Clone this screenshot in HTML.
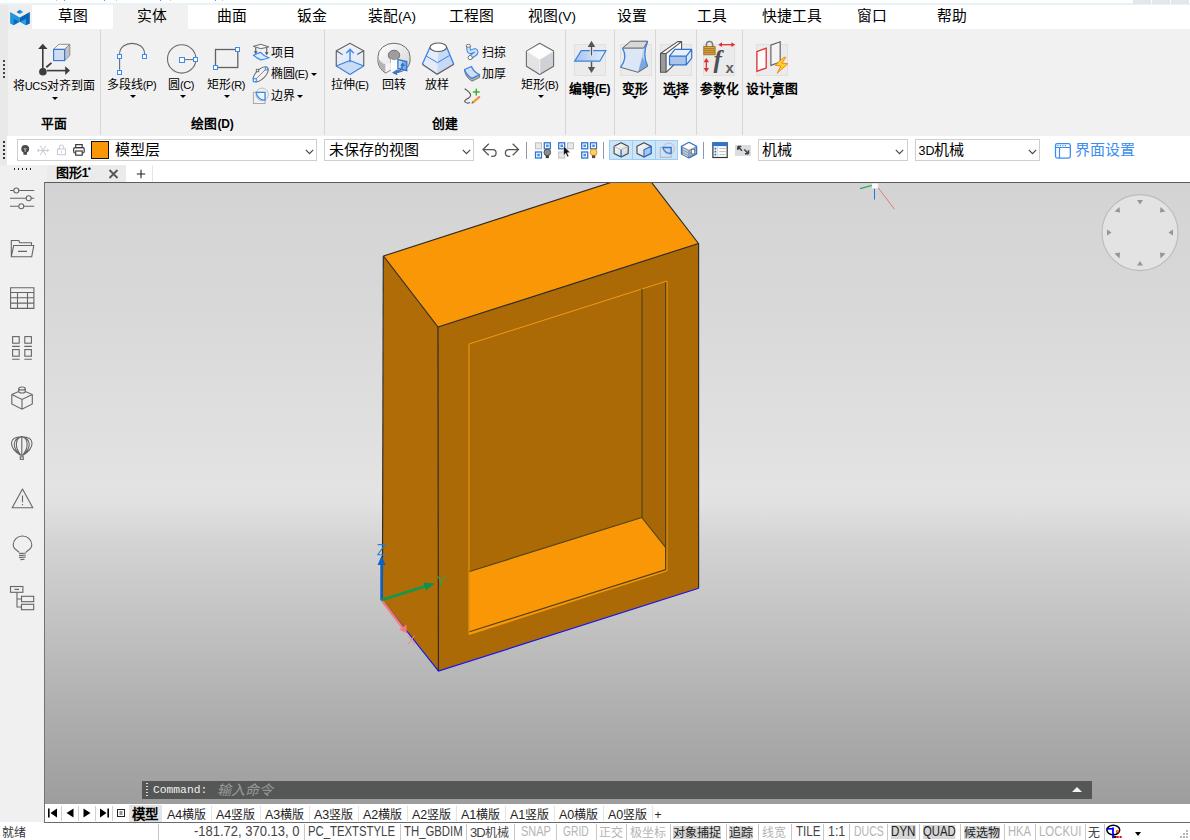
<!DOCTYPE html>
<html lang="zh-CN">
<head>
<meta charset="utf-8">
<title>CAD</title>
<style>
*{box-sizing:border-box;margin:0;padding:0}
html,body{width:1190px;height:840px;overflow:hidden;background:#fff}
body{position:relative;font-family:"Liberation Sans",sans-serif;font-size:12px;color:#000}
.abs{position:absolute}
.t{position:absolute;white-space:nowrap;line-height:1}
.l{font-size:11px;letter-spacing:-.35px}
#topstrip{left:0;top:0;width:1190px;height:5px;background:#fff}
#tabrow{left:0;top:5px;width:1190px;height:24px;background:#fff}
#gutterTop{left:0;top:5px;width:8px;height:131px;background:#e9e9ea}
#activeTab{left:113px;top:5px;width:75px;height:24px;background:#f1f1f1}
.tab{position:absolute;top:7.5px;font-size:14.8px;line-height:17px;white-space:nowrap;color:#000;transform:translateX(-50%)}
.tab .l{font-size:13.5px;letter-spacing:0}
#ribbon{left:8px;top:29px;width:1182px;height:107px;background:#f1f1f1}
.vsep{position:absolute;width:1px;background:#d6d6d6}
.rl{position:absolute;top:79px;font-size:12px;line-height:13px;white-space:nowrap;transform:translateX(-50%);color:#000}
.rlb{position:absolute;font-size:12.8px;line-height:13px;font-weight:bold;white-space:nowrap;transform:translateX(-50%);color:#000}
.rlb .l{font-size:12px;letter-spacing:-.2px}
.dd{position:absolute;width:0;height:0;border-left:3.5px solid transparent;border-right:3.5px solid transparent;border-top:3.4px solid #000}
.ibox{position:absolute;top:44px;width:32px;height:31.5px;background:#ebebeb;border:1px solid #e0e0e0}
#tb2{left:0;top:136px;width:1190px;height:29px;background:#fff}
.combo{position:absolute;top:139px;height:22px;border:1px solid #cfcfcf;background:#fff}
.combo>span{position:absolute;top:1px;font-size:15px;line-height:17px;white-space:nowrap}
#docrow{left:0;top:165px;width:1190px;height:17px;background:#f0f0f0}
#sidebar{left:0;top:165px;width:44px;height:657px;background:#f0f0f0}
#vp{left:44px;top:182px;width:1146px;height:622px;border-top:1px solid #5c5c5c;border-left:1.5px solid #747474;
background:linear-gradient(to bottom,#d3d3d3 0px,#d6d6d6 50px,#d7d7d7 100px,#e3e3e3 305px,#e1e1e1 320px,#d4d4d4 358px,#bfbfbf 454px,#aeaeae 533px,#9d9d9d 622px)}
#cmd{left:142px;top:781px;width:950px;height:18px;background:#555757}
#layrow{left:44px;top:804px;width:1146px;height:18px;background:#fff;border-left:1.5px solid #747474}
#status{left:0;top:822px;width:1190px;height:18px;background:#fff}
#stline{left:44px;top:822px;width:1146px;height:1px;background:#6a6a6a}
.st{position:absolute;top:826.5px;font-size:12px;line-height:13px;height:13.5px;white-space:nowrap;color:#444;transform-origin:0 0}
.st.e{top:825px;font-size:14px;transform:scaleX(.805)}
.st.n{top:825px;font-size:14px;transform:scaleX(.928)}
.st.g{color:#b4b4b4}
.st.on{background:#d6d6d6;color:#222}
.st.on:not(.e){top:825.5px;padding-top:1px;height:13.5px}
.ssep{position:absolute;top:824px;width:1px;height:16px;background:#c8c8c8}
.lt{position:absolute;top:808px;font-size:12px;line-height:14px;white-space:nowrap;color:#222}
.lt .l{font-size:12.5px;letter-spacing:-.2px}
</style>
</head>
<body>

<div class="abs" id="topstrip"></div>
<div class="abs" style="left:0;top:3px;width:1190px;height:2px;background:#e6f4f8"></div>
<div class="abs" style="left:1133px;top:0;width:18px;height:4px;background:#e5e6e9"></div>
<div class="abs" style="left:1152px;top:0;width:18px;height:4px;background:#e5e6e9"></div>
<div class="abs" style="left:1171px;top:0;width:18px;height:4px;background:#e5e6e9"></div>
<div class="abs" style="left:56px;top:0;width:1px;height:1px;background:#e8a040;opacity:.7"></div>
<div class="abs" style="left:64px;top:0;width:1px;height:1px;background:#4060c0;opacity:.7"></div>
<div class="abs" style="left:104px;top:0;width:1px;height:1px;background:#4060c0;opacity:.7"></div>
<div class="abs" style="left:116px;top:0;width:1px;height:1px;background:#e8a040;opacity:.7"></div>
<div class="abs" style="left:160px;top:0;width:1px;height:1px;background:#4060c0;opacity:.7"></div>
<div class="abs" style="left:170px;top:0;width:1px;height:1px;background:#e8a040;opacity:.7"></div>
<div class="abs" style="left:215px;top:0;width:1px;height:1px;background:#4060c0;opacity:.7"></div>
<div class="abs" style="left:222px;top:0;width:1px;height:1px;background:#e8a040;opacity:.7"></div>
<div class="abs" id="tabrow"></div>
<div class="abs" id="ribbon"></div>
<div class="abs" id="gutterTop"></div>
<div class="abs" id="activeTab"></div>
<div class="abs" style="left:8px;top:5px;width:24px;height:24px;background:#eeeeee"></div>
<svg class="abs" style="left:8px;top:5px" width="24" height="23" viewBox="8 5 24 23">
<polygon points="10.1,12.1 19.9,17.5 19.9,21.700 13.6,25.300 10.1,23.600" fill="#2196dc"/>
<polygon points="13.800,18.800 19.200,21.800 13.800,24.900" fill="#0a6ac0"/>
<polygon points="29.800,12.100 19.900,17.500 19.900,21.700 26.100,25.300 29.800,23.600" fill="#0a64b8"/>
<polygon points="26,18.800 20.600,21.800 26,24.900" fill="#2aa0e0"/>
<polygon points="16.600,11.900 19.900,9.800 19.900,13.900" fill="#0a6ac0"/>
<polygon points="23.200,11.900 19.900,9.800 19.900,13.900" fill="#2196dc"/>
</svg>
<div class="tab" style="left:73px">草图</div>
<div class="tab" style="left:152px">实体</div>
<div class="tab" style="left:232px">曲面</div>
<div class="tab" style="left:312px">钣金</div>
<div class="tab" style="left:392px">装配<span class="l">(A)</span></div>
<div class="tab" style="left:471.5px">工程图</div>
<div class="tab" style="left:552px">视图<span class="l">(V)</span></div>
<div class="tab" style="left:632px">设置</div>
<div class="tab" style="left:712px">工具</div>
<div class="tab" style="left:792px">快捷工具</div>
<div class="tab" style="left:872px">窗口</div>
<div class="tab" style="left:952px">帮助</div>
<div class="vsep" style="left:100px;top:30px;height:105px"></div>
<div class="vsep" style="left:324px;top:30px;height:105px"></div>
<div class="vsep" style="left:565px;top:30px;height:105px"></div>
<div class="vsep" style="left:614px;top:30px;height:105px"></div>
<div class="vsep" style="left:655px;top:30px;height:105px"></div>
<div class="vsep" style="left:696px;top:30px;height:105px"></div>
<div class="vsep" style="left:742px;top:30px;height:105px"></div>
<div class="abs" style="left:3px;top:60px;width:2px;height:18px;background:repeating-linear-gradient(to bottom,#444 0 2px,transparent 2px 4px)"></div>
<div class="ibox" style="left:574px"></div>
<div class="ibox" style="left:619.5px"></div>
<div class="ibox" style="left:660px"></div>
<div class="ibox" style="left:703px"></div>
<div class="ibox" style="left:756px"></div>
<svg class="abs" style="left:0;top:29px" width="1190" height="107" viewBox="0 29 1190 107">
<defs>
<linearGradient id="gPl" x1="0" y1="0" x2="1" y2="0"><stop offset="0" stop-color="#a6c3ee"/><stop offset="1" stop-color="#e6eefa"/></linearGradient>
<linearGradient id="gBx" x1="0" y1="0" x2="0" y2="1"><stop offset="0" stop-color="#eef2fa"/><stop offset="1" stop-color="#dbe7f8"/></linearGradient>
<linearGradient id="gRv" x1="0" y1="0" x2="1" y2="1"><stop offset="0" stop-color="#ffffff"/><stop offset="1" stop-color="#d4d4d4"/></linearGradient>
<linearGradient id="gSec" x1="0" y1="0" x2="1" y2="0"><stop offset="0" stop-color="#dfeafa"/><stop offset="1" stop-color="#5d97e2"/></linearGradient>
</defs>
<!-- UCS align -->
<g fill="#3c3c3c" stroke="#3c3c3c">
<line x1="42.8" y1="48" x2="42.8" y2="68.500" stroke-width="1.600"/>
<polygon points="42.8,43.7 38.1,48.9 47.5,48.9" stroke="none"/>
<line x1="47" y1="70.600" x2="66" y2="70.600" stroke-width="1.600"/>
<polygon points="70,70.600 65.2,66.200 65.2,75" stroke="none"/>
<line x1="46.300" y1="67.300" x2="51.500" y2="62.900" stroke-width="1.800"/>
<circle cx="42.900" cy="71.700" r="3.800" stroke="none"/>
</g>
<polygon points="53.500,49.300 58.800,44.300 69.800,44.300 64.600,49.300" fill="#f7f7f7" stroke="#858585" stroke-width=".9"/>
<polygon points="64.600,49.300 69.800,44.300 69.800,55.600 64.600,60.600" fill="#c2c2c2" stroke="#858585" stroke-width=".9"/>
<rect x="53.600" y="49.400" width="11" height="11.200" fill="#cfddf3" stroke="#2f74d0" stroke-width="1.100"/>
<!-- polyline -->
<path d="M119.600,54 C119.600,39.800 144.600,39.800 144.600,54 M119.600,58.900 V69.800" fill="none" stroke="#6a6a6a" stroke-width="1.100"/>
<g fill="#fff" stroke="#3b8cf0" stroke-width="1"><rect x="117.500" y="54.500" width="4" height="4"/><rect x="142.500" y="54.500" width="4" height="4"/><rect x="117.500" y="70.500" width="4" height="4"/></g>
<!-- circle -->
<circle cx="181.700" cy="58.900" r="14.200" fill="none" stroke="#6a6a6a" stroke-width="1.100"/>
<line x1="184.600" y1="59.600" x2="193.200" y2="59.600" stroke="#6a6a6a" stroke-width="1"/>
<g fill="#fff" stroke="#3b8cf0" stroke-width="1"><rect x="179.500" y="57.500" width="5" height="5"/><rect x="193.500" y="57.500" width="4" height="4"/></g>
<!-- rect -->
<rect x="215.500" y="49.500" width="22.300" height="18" fill="none" stroke="#5e6268" stroke-width="1.300"/>
<g fill="#fff" stroke="#3b8cf0" stroke-width="1"><rect x="235.500" y="47.500" width="4" height="4"/><rect x="213.500" y="65.500" width="4" height="4"/></g>
<!-- project -->
<path d="M253.300,46.300 L260.800,44.300 L268.800,46.900 L260.800,48.700 Z" fill="#f4f4f4" stroke="#6a6a6a" stroke-width="1"/>
<path d="M255.700,47.200 V52.800 M266.700,47.800 V53.800" stroke="#6a6a6a" stroke-width="1.200" fill="none"/>
<polygon points="253.800,51.300 257.600,51.300 255.700,54.200" fill="#5a5a5a"/><polygon points="264.800,52.300 268.600,52.300 266.700,55.200" fill="#5a5a5a"/>
<path d="M253.500,55.300 Q258,53.200 260.600,52.400 Q263.200,55.700 268.800,57.800 Q263.500,59.600 260.800,59.900 Q257,58.200 253.500,55.300 Z" fill="#e1ecfb" stroke="#3b8cf0" stroke-width="1.200"/>
<!-- ellipse -->
<ellipse cx="260.700" cy="74.300" rx="9.600" ry="4.700" transform="rotate(-45 260.700 74.300)" fill="none" stroke="#6a6a6a" stroke-width="1"/>
<line x1="254.800" y1="80.200" x2="266.500" y2="68.500" stroke="#8a8a8a" stroke-width="1"/>
<rect x="253.300" y="78.700" width="3" height="3" fill="#fff" stroke="#3b8cf0" stroke-width="1.100"/><rect x="265.300" y="67.700" width="2.300" height="2.300" fill="#fff" stroke="#3b8cf0" stroke-width="1"/>
<rect x="256.300" y="69.300" width="2.400" height="2.400" fill="#f4f4f4" stroke="#6a6a6a" stroke-width=".9"/>
<!-- boundary -->
<circle cx="262.100" cy="94.400" r="6.300" fill="none" stroke="#c4bccb" stroke-width="1"/>
<rect x="253.400" y="92.300" width="11.600" height="11.200" fill="none" stroke="#a8a8a8" stroke-width="1"/>
<path d="M256.300,92.300 H265 V100.200 A8.200,8.200 0 0 1 256.300,92.300 Z" fill="#f4f8fe" stroke="#3b8cf0" stroke-width="1.300"/>
<!-- extrude -->
<polygon points="350,43.300 363.750,50.800 363.750,66 350,74.500 336.250,66 336.250,50.800" fill="url(#gBx)"/>
<polygon points="336.250,66 350,60.500 363.750,66 350,74.500" fill="#c9dcf5" stroke="#3d82dc" stroke-width="1.100" stroke-linejoin="round"/>
<path d="M336.250,66 V50.800 L350,43.300 L363.750,50.800 V66 M336.250,50.800 L342.600,54.600 M363.750,50.800 L357.200,54.600" fill="none" stroke="#5a5a5a" stroke-width="1.100"/>
<path d="M350,62.200 V50 M346.200,53.300 L350,49.400 L353.800,53.300" fill="none" stroke="#4a8fe0" stroke-width="1.500"/>
<!-- revolve -->
<path d="M378,56.500 A16,13.300 0 0 1 410,56.500 V62 A16,13.300 0 0 1 398,72.500 L398,62 L391,60 V69.800 L385.500,73 Q379,69 378,62 Z" fill="url(#gRv)" stroke="#6c6c6c" stroke-width="1"/>
<path d="M378.400,58 V62 Q379.500,69 385.500,72.600 V64.600 Q380.500,62.500 378.400,58 Z" fill="#b4b4b4"/><path d="M385.500,64.600 V72.600 L390.800,69.600 V62.500 Z" fill="#f4f4f4"/>
<ellipse cx="394" cy="55.200" rx="5.700" ry="5" fill="#9d9d9d" stroke="#747474" stroke-width="1"/>
<path d="M390.900,58.800 Q394,61.200 397.400,59 L397.400,69 L390.900,71.300 Z" fill="#fdfdfd"/>
<polygon points="398,59.600 406.800,61.600 406.800,70.600 398,68.300" fill="url(#gSec)" stroke="#2f74d0" stroke-width="1.200"/>
<path d="M402.700,64.500 Q402.500,71 396,72.300" fill="none" stroke="#2f74d0" stroke-width="1.700"/>
<polygon points="392,72.700 397.200,69.400 397.200,75.200" fill="#2f74d0"/><polygon points="402.700,62.300 400.200,66 405.200,66" fill="#2f74d0"/>
<!-- loft -->
<polygon points="430,47.250 422.300,64.300 437.100,74.300 438.300,51.450" fill="#e4ecf9"/>
<polygon points="438.300,51.450 437.100,74.300 453.750,64.300 446.700,47.250" fill="#c6d9f5"/>
<path d="M422.300,64.300 L430,47.250 M446.700,47.250 L453.750,64.300" fill="none" stroke="#3d82dc" stroke-width="1.300"/>
<polyline points="426.200,56 437.500,62.700 449.300,55.600" fill="none" stroke="#3d82dc" stroke-width="1"/>
<polyline points="422.300,64.300 437.100,74.300 453.750,64.300" fill="none" stroke="#5a5a5a" stroke-width="1.200"/>
<ellipse cx="438.300" cy="47.250" rx="8.300" ry="4.200" fill="#fff" stroke="#5a5a5a" stroke-width="1.100"/>
<!-- sweep -->
<path d="M468.400,46.200 C468.400,52.400 469.600,52.800 473,50.900 C476.800,49 477.200,52.800 474.200,54.600 L470.300,57.400" fill="none" stroke="#3d82dc" stroke-width="4.400" stroke-linecap="butt"/>
<path d="M468.400,46.200 C468.400,52.400 469.600,52.800 473,50.900 C476.800,49 477.200,52.800 474.200,54.600 L470.300,57.400" fill="none" stroke="#cfe0f8" stroke-width="2.400"/>
<ellipse cx="468.400" cy="45.800" rx="2.300" ry="1.400" fill="#fff" stroke="#666" stroke-width=".9"/>
<circle cx="470.200" cy="57.600" r="2.100" fill="#fff" stroke="#666" stroke-width=".9"/>
<!-- thicken -->
<path d="M464.500,69.500 Q465,77 472,81.200 L479.600,77.400 V74.500 L472,78.300 Q466.500,75.500 464.500,69.500 Z" fill="#b2b2b2" stroke="#666" stroke-width=".8"/>
<path d="M464.500,69.500 L471.500,66.500 Q474,72.500 479.600,74.500 L472,78.300 Q466.500,75.500 464.500,69.500 Z" fill="#cfe0f6" stroke="#3d82dc" stroke-width="1.300" stroke-linejoin="round"/>
<!-- sketch plus -->
<path d="M464.700,88.700 Q470.600,92.500 470.600,95 Q470.600,97.500 466.500,99.200 Q463.500,100.800 465.500,102.400 Q467.500,103.700 469.900,102.500" fill="none" stroke="#555" stroke-width="1.100"/>
<path d="M476.300,88.700 V95.500 M472.900,92.100 H479.700" stroke="#3cb034" stroke-width="1.500" fill="none"/>
<line x1="473" y1="102.300" x2="478.600" y2="97.600" stroke="#f0a020" stroke-width="2.300"/>
<polygon points="471.400,103.700 472.200,101.300 473.900,103.100" fill="#666"/><circle cx="479.100" cy="97.100" r="1.200" fill="#ee7a90"/>
<!-- box -->
<polygon points="539.700,43.300 553.600,51.100 539.700,59.400 526.400,51.100" fill="#fdfdfd"/>
<polygon points="526.400,51.100 539.700,59.400 539.700,74.500 526.400,66.250" fill="#e3e3e3"/>
<polygon points="539.700,59.400 553.600,51.100 553.600,66.250 539.700,74.500" fill="#ced2d7"/>
<polygon points="539.700,43.300 553.600,51.100 553.600,66.250 539.700,74.500 526.400,66.250 526.400,51.100" fill="none" stroke="#6a6a6a" stroke-width="1.100" stroke-linejoin="round"/>
<path d="M526.900,51.400 L539.700,59.400 L553.100,51.400 M539.700,59.400 V74" fill="none" stroke="#f6f6f6" stroke-width=".9"/>
<!-- edit -->
<polygon points="574.600,61.200 581.200,50.600 605.900,50.600 599.800,61.200" fill="url(#gPl)" stroke="#3d82dc" stroke-width="1.200"/>
<line x1="591.500" y1="46" x2="591.500" y2="56" stroke="#fff" stroke-width="3.200"/>
<line x1="591.500" y1="46" x2="591.500" y2="55.600" stroke="#555" stroke-width="1.500"/>
<polygon points="591.500,40.800 587.800,47 595.200,47" fill="#555"/>
<line x1="591.500" y1="61.800" x2="591.500" y2="68" stroke="#555" stroke-width="1.500"/>
<polygon points="591.500,73 587.800,67 595.200,67" fill="#555"/>
<!-- deform -->
<path d="M622.500,48.100 Q628,57.500 620.500,67.300 L638.100,72.300 L643.700,48.100 Z" fill="#dbe6f7"/>
<path d="M643.700,48.100 L647.700,41.200 Q641.800,55 647.700,66.250 L638.100,72.300 Z" fill="#b9cfef"/>
<polygon points="647.400,66.250 638.100,72.300 642.300,57.500" fill="#7ba5df"/>
<polygon points="622.500,48.100 630.600,41.200 647.700,41.200 643.700,48.100" fill="#d8d8d8" stroke="#5a5a5a" stroke-width="1"/>
<path d="M622.500,48.100 Q628,57.500 620.500,67.300 M647.700,41.200 Q641.800,55 647.700,66.250" fill="none" stroke="#3d82dc" stroke-width="1.300"/>
<polyline points="620.500,67.300 638.100,72.300 647.700,66.250" fill="none" stroke="#666" stroke-width="1"/>
<!-- select -->
<polygon points="666.100,53.500 681.600,41.600 681.600,57.500 666.100,72.300" fill="#fbfbfb"/>
<polygon points="660.500,53.500 677.600,41.600 681.600,41.600 666.100,53.500" fill="#fff"/>
<rect x="660.500" y="53.500" width="5.600" height="18.800" fill="#9b9b9b"/>
<path d="M660.500,72.300 V53.500 L677.600,41.600 H681.600 V57.500 L666.100,72.300 Z M660.500,53.500 H666.100 L681.600,41.600 M666.100,53.500 V72.300" fill="none" stroke="#555" stroke-width="1.100" stroke-linejoin="round"/>
<polygon points="669.500,56.200 674.900,49.400 691.700,49.400 686.300,56.200" fill="#e9f0fb"/>
<polygon points="686.300,56.200 691.700,49.400 691.700,58.200 686.300,64.900" fill="#dfe9f8"/>
<rect x="669.500" y="56.200" width="16.800" height="8.700" fill="#a9c5ee"/>
<path d="M669.500,56.200 L674.900,49.400 H691.700 V58.200 L686.300,64.900 H669.500 Z M669.500,56.200 H686.300 L691.700,49.400 M686.300,56.200 V64.900" fill="none" stroke="#2f74d0" stroke-width="1.200" stroke-linejoin="round"/>
<!-- parametric -->
<path d="M706.400,47 V44.600 A3.100,3.100 0 0 1 712.600,44.600 V47" fill="none" stroke="#7a7a7a" stroke-width="1.500"/>
<rect x="703.800" y="46.600" width="11.300" height="8.200" fill="#dba844" stroke="#96641a" stroke-width=".8"/>
<path d="M704.200,48.700 H714.800 M704.200,50.700 H714.800 M704.200,52.700 H714.800" stroke="#96641a" stroke-width=".8"/>
<line x1="720.500" y1="44.700" x2="733" y2="44.700" stroke="#e03030" stroke-width="1.300"/>
<polygon points="718.200,44.700 722,42.300 722,47.100" fill="#e03030"/><polygon points="735.200,44.700 731.400,42.300 731.400,47.100" fill="#e03030"/>
<line x1="706.300" y1="60.500" x2="706.300" y2="69.500" stroke="#e03030" stroke-width="1.300"/>
<polygon points="706.300,58 703.600,62.200 709,62.200" fill="#e03030"/><polygon points="706.300,72.200 703.600,68 709,68" fill="#e03030"/>
<text x="713.500" y="68" font-family="Liberation Serif" font-style="italic" font-weight="bold" font-size="25" fill="#505050">f</text>
<text x="725.600" y="72.700" font-family="Liberation Sans" font-weight="bold" font-size="15" fill="#5e5e5e">x</text>
<!-- design intent -->
<polygon points="756.900,51.600 766.200,48.100 766.200,68 756.900,71.300" fill="#fbfbfb" stroke="#e03030" stroke-width="1.300"/>
<polygon points="770.900,45.100 780.200,41.800 780.200,62 770.900,65.300" fill="#f4f4f4" stroke="#666" stroke-width="1.200"/>
<polygon points="783.800,57.300 775.200,65.300 780.800,66 777.200,73.200 787.800,63.700 781.800,63.100 785.800,57.300" fill="#ffcf24" stroke="#f08a12" stroke-width="1"/>
</svg>

<div class="rl" style="left:53.8px;top:80.4px">将<span class="l">UCS</span>对齐到面</div>
<div class="dd" style="left:51.5px;top:96.60000000000001px"></div>
<div class="rl" style="left:131.5px;top:79px">多段线<span class="l">(P)</span></div>
<div class="dd" style="left:129.8px;top:95.2px"></div>
<div class="rl" style="left:181px;top:79px">圆<span class="l">(C)</span></div>
<div class="dd" style="left:179.6px;top:95.2px"></div>
<div class="rl" style="left:226px;top:79px">矩形<span class="l">(R)</span></div>
<div class="dd" style="left:223.6px;top:95.2px"></div>
<div class="rl" style="left:349.7px;top:79px">拉伸<span class="l">(E)</span></div>
<div class="rl" style="left:394px;top:79px">回转</div>
<div class="rl" style="left:437.3px;top:79px">放样</div>
<div class="rl" style="left:539.5px;top:79px">矩形<span class="l">(B)</span></div>
<div class="dd" style="left:537.5px;top:95.2px"></div>
<div class="t" style="left:270.5px;top:46.5px;font-size:12px;line-height:13px">项目</div>
<div class="t" style="left:270.5px;top:68px;font-size:12px;line-height:13px">椭圆<span class="l">(E)</span></div>
<div class="t" style="left:270.5px;top:89.7px;font-size:12px;line-height:13px">边界</div>
<div class="t" style="left:481.5px;top:46.5px;font-size:12px;line-height:13px">扫掠</div>
<div class="t" style="left:481.5px;top:68px;font-size:12px;line-height:13px">加厚</div>
<div class="dd" style="left:310.5px;top:73.2px"></div><div class="dd" style="left:296.500px;top:95.200px"></div>
<div class="rlb" style="left:589.7px;top:82px">编辑<span class="l">(E)</span></div>
<div class="dd" style="left:586.5px;top:96px"></div>
<div class="rlb" style="left:634.5px;top:82px">变形</div>
<div class="dd" style="left:631.6px;top:96px"></div>
<div class="rlb" style="left:675.8px;top:82px">选择</div>
<div class="dd" style="left:672.5px;top:96px"></div>
<div class="rlb" style="left:719px;top:82px">参数化</div>
<div class="dd" style="left:715.4px;top:96px"></div>
<div class="rlb" style="left:771.8px;top:82px">设计意图</div>
<div class="dd" style="left:768.5px;top:96px"></div>
<div class="rlb" style="left:54px;top:116.5px">平面</div>
<div class="rlb" style="left:212.5px;top:116.5px">绘图<span class="l">(D)</span></div>
<div class="rlb" style="left:445px;top:116.5px">创建</div>
<div class="abs" id="tb2"></div>
<div class="abs" style="left:0;top:136px;width:7px;height:29px;background:#e9e9ea"></div>
<div class="abs" style="left:3px;top:141px;width:2px;height:18px;background:repeating-linear-gradient(to bottom,#333 0 2px,transparent 2px 4px)"></div>
<div class="combo" style="left:17px;width:300px"><span style="left:97px">模型层</span></div><svg class="abs" style="left:304.8px;top:149px" width="9" height="6" viewBox="0 0 9 6"><polyline points="0.8,0.8 4.5,4.600 8.200,0.800" fill="none" stroke="#444" stroke-width="1.100"/></svg>
<div class="abs" style="left:91px;top:141px;width:18px;height:18px;background:#f99706;border:1px solid #111"></div>
<div class="combo" style="left:324px;width:150px"><span style="left:4px">未保存的视图</span></div><svg class="abs" style="left:461.8px;top:149px" width="9" height="6" viewBox="0 0 9 6"><polyline points="0.8,0.8 4.5,4.600 8.200,0.800" fill="none" stroke="#444" stroke-width="1.100"/></svg>
<div class="combo" style="left:758px;width:150px"><span style="left:3px">机械</span></div><svg class="abs" style="left:895.4px;top:149px" width="9" height="6" viewBox="0 0 9 6"><polyline points="0.8,0.8 4.5,4.600 8.200,0.800" fill="none" stroke="#444" stroke-width="1.100"/></svg>
<div class="combo" style="left:915px;width:125px"><span style="left:2.500px"><i style="font-style:normal;font-size:12.500px">3D</i>机械</span></div><svg class="abs" style="left:1027.6px;top:149px" width="9" height="6" viewBox="0 0 9 6"><polyline points="0.8,0.8 4.5,4.600 8.200,0.800" fill="none" stroke="#444" stroke-width="1.100"/></svg>
<div class="t" style="left:1074.500px;top:142px;font-size:15px;line-height:16px;color:#3b8ef0">界面设置</div>
<div class="abs" style="left:526px;top:141.500px;width:1px;height:17.500px;background:#8c98a4"></div>
<div class="abs" style="left:603px;top:141.500px;width:1px;height:17.500px;background:#8c98a4"></div>
<div class="abs" style="left:703px;top:141.500px;width:1px;height:17.500px;background:#8c98a4"></div>
<div class="abs" style="left:609px;top:139.500px;width:69px;height:20.500px;background:#cde5f8;border:1px solid #9ccdf5"></div>
<div class="abs" style="left:632px;top:139.500px;width:1px;height:20.500px;background:#9ccdf5"></div>
<div class="abs" style="left:655px;top:139.500px;width:1px;height:20.500px;background:#9ccdf5"></div>
<div class="abs" style="left:735px;top:144.500px;width:16px;height:11px;background:#d8dde1"></div>
<svg class="abs" style="left:0;top:136px" width="1190" height="29" viewBox="0 136 1190 29">
<defs><linearGradient id="gCb" x1="0" y1="0" x2="1" y2="1"><stop offset="0" stop-color="#ffffff"/><stop offset="1" stop-color="#d2d2d2"/></linearGradient></defs>
<!-- bulb -->
<circle cx="25.200" cy="148.800" r="3.900" fill="#4a4a4a"/><rect x="23.400" y="151.800" width="3.600" height="3" rx=".6" fill="#4a4a4a"/>
<path d="M24,148 L25.200,150 L26.400,148 M25.200,150 V152" fill="none" stroke="#d8d8d8" stroke-width=".8"/>
<!-- snowflake -->
<g stroke="#cdc5d6" stroke-width="1" fill="none"><path d="M37.500,150.400 H48.700 M40.300,145.700 L45.900,155.100 M45.900,145.700 L40.300,155.100"/><path d="M39,149 L37.500,150.400 L39,151.800 M47.200,149 L48.700,150.400 L47.200,151.800"/></g>
<!-- lock -->
<rect x="57.500" y="149" width="8" height="5.700" fill="none" stroke="#cdc5d6" stroke-width="1"/><path d="M59.300,149 V147.200 A2.200,2.200 0 0 1 63.700,147.200 V149" fill="none" stroke="#cdc5d6" stroke-width="1"/><rect x="61" y="151" width="1" height="2" fill="#cdc5d6"/>
<!-- printer -->
<g fill="none" stroke="#3c3c3c" stroke-width="1.200"><rect x="75.700" y="144.600" width="6.500" height="3"/><rect x="73.700" y="147.600" width="10.500" height="5.400" rx="1.200"/><rect x="75.700" y="151" width="6.500" height="4.200" fill="#fff"/></g>
<!-- undo / redo -->
<path d="M488.800,143.800 L483,149.600 L488.800,155.300 M483.400,149.600 H492.700 A3.400,3.400 0 0 1 492.700,156.400 H491.200" fill="none" stroke="#555" stroke-width="1.300"/>
<path d="M512.700,143.800 L518.500,149.600 L512.700,155.300 M518.100,149.600 H508.800 A3.400,3.400 0 0 0 508.800,156.400 H510.300" fill="none" stroke="#555" stroke-width="1.300"/>
<!-- select icons -->
<g id="sq">
<g fill="#e9e9e9" stroke="#bdbdbd" stroke-width="1"><rect x="535.500" y="142.800" width="6" height="6"/></g>
<g fill="#fff" stroke="#2f74d0" stroke-width="1.300"><rect x="544.300" y="142.800" width="6" height="6"/><rect x="535.500" y="152" width="6" height="6"/></g>
<g fill="#4a90f0"><rect x="546" y="144.500" width="2.600" height="2.600"/><rect x="537.200" y="153.700" width="2.600" height="2.600"/></g>
<circle cx="547.300" cy="152.400" r="3.300" fill="#8e8e8e" stroke="#4a4a4a" stroke-width=".9"/><rect x="545.700" y="155.300" width="3.200" height="2.800" fill="#3c3c3c"/>
</g>
<g fill="#e9e9e9" stroke="#bdbdbd" stroke-width="1"><rect x="567.500" y="142.800" width="6" height="6"/><rect x="558.700" y="152" width="6" height="6"/></g>
<rect x="558.700" y="142.800" width="6" height="6" fill="#fff" stroke="#2f74d0" stroke-width="1.300"/><rect x="560.400" y="144.500" width="2.600" height="2.600" fill="#4a90f0"/>
<polygon points="563.600,146 563.600,155.200 565.800,153.400 567.400,157 568.900,156.300 567.300,152.800 570.200,152.600" fill="#111" stroke="#fff" stroke-width=".5"/>
<g fill="#fff" stroke="#2f74d0" stroke-width="1.300"><rect x="581.700" y="142.800" width="6" height="6"/><rect x="590.500" y="142.800" width="6" height="6"/><rect x="581.700" y="152" width="6" height="6"/></g>
<g fill="#4a90f0"><rect x="583.400" y="144.500" width="2.600" height="2.600"/><rect x="592.200" y="144.500" width="2.600" height="2.600"/><rect x="583.400" y="153.700" width="2.600" height="2.600"/></g>
<circle cx="593.600" cy="152.300" r="3.400" fill="#fbd15a" stroke="#e58a1c" stroke-width=".9"/><rect x="592" y="155.300" width="3.200" height="2.800" fill="#5a4a3a"/>
<!-- cube buttons -->
<polygon points="621.100,142.700 628.200,146.300 628.200,153.400 621.100,156.900 614.100,153.400 614.100,146.300" fill="url(#gCb)" stroke="#444" stroke-width="1.100" stroke-linejoin="round"/>
<path d="M614.100,146.300 L621.100,149.800 L628.200,146.300" fill="none" stroke="#b0b0b0" stroke-width=".8"/><line x1="621.100" y1="149.800" x2="621.100" y2="156.600" stroke="#2f74d0" stroke-width="1.400"/>
<polygon points="644,142.700 651.100,146.300 651.100,153.400 644,156.900 637,153.400 637,146.300" fill="url(#gCb)" stroke="#444" stroke-width="1.100" stroke-linejoin="round"/>
<polygon points="644,149.800 651.100,146.300 651.100,153.400 644,156.900" fill="#a9c5ee" stroke="#2f74d0" stroke-width="1.200" stroke-linejoin="round"/>
<rect x="660.300" y="147.500" width="10.800" height="9.800" fill="none" stroke="#b4b4b4" stroke-width="1"/>
<circle cx="668.800" cy="148.600" r="5.600" fill="none" stroke="#cbb9c2" stroke-width="1"/>
<path d="M663,147.500 H671.100 V153.300 A7,7 0 0 1 663,147.500 Z" fill="#c4d8f4" stroke="#2f74d0" stroke-width="1.300"/>
<!-- textured cube -->
<polygon points="689,142.300 696.600,146.300 696.600,154 689,157.900 681.500,154 681.500,146.300" fill="#8fa0b4" stroke="#2f74d0" stroke-width="1.300" stroke-linejoin="round"/>
<polygon points="689,142.900 695.600,146.400 689,149.800 682.500,146.400" fill="#fff"/>
<path d="M683,149 L688,151.500 M683,151.500 L688,154 M683,154 L688,156.500 M690.500,151.500 L695.500,149 M690.500,154.500 L695.500,152" stroke="#e8e8e8" stroke-width=".9"/>
<rect x="691.500" y="149.300" width="3.200" height="4.600" fill="#fff" stroke="#555" stroke-width=".6"/>
<!-- properties -->
<rect x="712.900" y="142.900" width="14.300" height="14.600" fill="#fff" stroke="#333" stroke-width="1.200"/>
<rect x="712.300" y="142.300" width="15.500" height="3.800" fill="#2f74d0"/>
<line x1="717.700" y1="146.200" x2="717.700" y2="157" stroke="#c8c8c8" stroke-width=".8"/>
<g fill="#2f74d0"><rect x="714.500" y="147.700" width="1.800" height="1.800"/><rect x="714.500" y="150.700" width="1.800" height="1.800"/><rect x="714.500" y="153.700" width="1.800" height="1.800"/></g>
<path d="M719.300,148.600 H725.600 M719.300,151.600 H725.600 M719.300,154.600 H725.600" stroke="#b4b4b4" stroke-width=".9"/>
<!-- arrows button -->
<path d="M737.800,146.500 H741.300 M737.800,146.500 V150 M737.800,146.500 L742,150.700 M748.500,153.800 H745 M748.500,153.800 V150.300 M748.500,153.800 L744.300,149.600" fill="none" stroke="#3a3a3a" stroke-width="1.400"/>
<!-- interface settings -->
<rect x="1055.500" y="143.700" width="14.800" height="14.400" rx="1.800" fill="none" stroke="#3b8ef0" stroke-width="1.300"/>
<path d="M1055.500,147.500 H1070.300 M1059.500,147.500 V158" fill="none" stroke="#3b8ef0" stroke-width="1.200"/>
<g fill="#3b8ef0"><rect x="1057.300" y="145" width="1.200" height="1.200"/><rect x="1059.800" y="145" width="1.200" height="1.200"/><rect x="1062.300" y="145" width="1.200" height="1.200"/><rect x="1064.800" y="145" width="1.200" height="1.200"/></g>
</svg>

<div class="abs" id="docrow"></div>
<div class="abs" id="sidebar"></div>
<div class="abs" style="left:47px;top:165px;width:1143px;height:17px;background:#fff"></div>
<div class="abs" style="left:47px;top:165px;width:79px;height:17px;background:#ebebeb"></div>
<div class="abs" style="left:152px;top:165px;width:1px;height:17px;background:#e6e6e6"></div>
<div class="abs" style="left:13.500px;top:168px;width:18px;height:2px;background:repeating-linear-gradient(to right,#222 0 1.500px,transparent 1.500px 4px)"></div>
<div class="t" style="left:55.500px;top:165.600px;font-size:13px;line-height:14px;font-weight:bold">图形1<span style="font-size:9px;position:relative;top:-5px;margin-left:-1px">•</span></div>
<svg class="abs" style="left:108px;top:168.500px" width="11" height="10" viewBox="0 0 11 10"><path d="M1.500,1 L9.500,9 M9.500,1 L1.500,9" stroke="#555" stroke-width="1.800" fill="none"/></svg>
<svg class="abs" style="left:135.500px;top:168.500px" width="10" height="10" viewBox="0 0 10 10"><path d="M5,.8 V9.200 M.8,5 H9.200" stroke="#222" stroke-width="1.100" fill="none"/></svg>
<svg class="abs" style="left:0;top:182px" width="44" height="440" viewBox="0 182 44 440">
<g fill="none" stroke="#666" stroke-width="1.100">
<!-- sliders -->
<path d="M10,190.500 H34.200 M10,198.300 H34.200 M10,206.300 H34.200"/>
<g fill="#f0f0f0"><circle cx="16.300" cy="190.500" r="2.500"/><circle cx="28.700" cy="198.300" r="2.500"/><circle cx="21.300" cy="206.300" r="2.500"/></g>
<!-- folder -->
<path d="M11.300,256.700 V240.500 H18.800 L19.800,242.700 H31.500 V245.500 M11.300,256.700 L13.700,245.500 H33.800 L31.700,256.700 Z M18,251.400 H27"/>
<!-- table -->
<path d="M10.600,287.800 H33.900 V308.400 H10.600 Z M10.600,292.500 H33.900 M10.600,297.800 H33.900 M10.600,303.100 H33.900 M17.500,292.500 V308.400 M27.500,292.500 V308.400"/>
<!-- grid -->
<rect x="12.600" y="336.600" width="6.600" height="6.600"/><rect x="24.800" y="336.600" width="6.600" height="6.600"/><rect x="12.600" y="349.600" width="6.600" height="6.600"/><rect x="24.800" y="349.600" width="6.600" height="6.600"/>
<path d="M12.100,346.400 H19.700 M24.300,346.400 H31.900 M12.100,359.200 H19.700 M24.300,359.200 H31.900"/>
<!-- block -->
<path d="M11.800,394.500 L22,390 L32.300,394.500 V404 L22,409.200 L11.800,404 Z M11.800,394.500 L22,399.500 L32.300,394.500 M22,399.500 V409.200"/>
<path d="M18.700,391.500 V388.500 A3.300,1.500 0 0 1 25.300,388.500 V391.500 A3.300,1.500 0 0 1 18.700,391.500 M18.700,388.500 A3.300,1.500 0 0 0 25.300,388.500" fill="#f0f0f0"/>
<!-- balloon -->
<path d="M21.800,436.800 C8,437 8.500,447.500 20.600,455.300 H23 C35,447.500 35.500,437 21.800,436.800 Z M21.800,436.800 C15,438 14.500,448 21,455.300 M21.800,436.800 C28.500,438 29,448 22.600,455.300 M21.800,436.800 V455.300 M21.800,436.800 C11.500,439 12.500,448.500 20.600,455.300 M21.800,436.800 C32,439 31,448.500 23,455.300"/>
<rect x="20.300" y="456.800" width="3" height="2.600"/>
<!-- warning -->
<path d="M22.500,489 L32.800,507.700 H12.200 Z M22.500,495.500 V502.300 M22.500,504 V505.300" stroke-linejoin="round"/>
<!-- bulb -->
<path d="M19.200,552.600 C18.800,551 13.200,549.500 13.200,545 A9.300,9 0 0 1 31.800,545 C31.800,549.500 26.200,551 25.800,552.600 M19.200,553.600 L25.800,553 M19.200,555.600 L25.800,555 M19.200,557.600 L25.800,557 M20.500,559.600 L24.500,559.200"/>
<!-- tree -->
<rect x="10.500" y="586.500" width="12.400" height="5.800"/><rect x="21.500" y="596.300" width="12.200" height="5.400"/><rect x="21.500" y="604.300" width="12.200" height="5.400"/>
<path d="M14.500,589.400 H19 M17,592.300 V607 H21.500 M17,599 H21.500"/>
</g>
</svg>

<div class="abs" id="vp"></div>
<svg class="abs" style="left:44px;top:182px" width="1146" height="622" viewBox="44 182 1146 622">
<defs><clipPath id="vpc"><rect x="45" y="183" width="1145" height="621"/></clipPath></defs>
<g clip-path="url(#vpc)">
<!-- box -->
<polygon points="383.5,256 618.4,180 649.7,180 698.5,243.5 438,327" fill="#f99706"/>
<polygon points="383.5,256 438,327 438.5,671 382.5,600" fill="#b06c06"/>
<polygon points="438,327 698.5,243.5 698.5,588.3 438.5,671" fill="#ab6a06"/>
<!-- recess: right inner wall -->
<polygon points="642,288.8 666,281.2 666,547.8 642,517.5" fill="#a76706"/>
<!-- recess floor -->
<polygon points="469.3,571.5 641.8,517.5 665.9,547.6 666.6,571.4 469.3,635" fill="#f99706"/>
<!-- recess outline -->
<polyline points="469,634.8 469,344 667,281 667,571.3" fill="none" stroke="#f29a12" stroke-width="1"/>
<!-- dark inner edges -->
<g fill="none" stroke="#4f4418" stroke-width="1.15">
<line x1="642" y1="288.8" x2="642" y2="517.5"/>
<line x1="665.6" y1="282" x2="665.6" y2="570"/>
<line x1="469.5" y1="571.5" x2="641.8" y2="517.5"/>
<line x1="641.8" y1="517.5" x2="665.8" y2="547.6"/>
<line x1="469.5" y1="631.8" x2="665.8" y2="569.6"/>
</g>
<!-- outer edges -->
<g fill="none" stroke="#2b2a28" stroke-width="1.15" stroke-linejoin="round">
<polyline points="618.4,180 383.5,256 438,327 698.5,243.5 649.7,180"/>
<line x1="438" y1="327" x2="438.4" y2="671"/>
<line x1="383.3" y1="256" x2="382.4" y2="600"/>
<line x1="698.6" y1="243.5" x2="698.6" y2="588.3"/>
</g>
<polyline points="382.2,600 438.5,671 698.6,588.3" fill="none" stroke="#1414f0" stroke-width="1.2"/>
<!-- UCS icon -->
<line x1="381.5" y1="600" x2="404" y2="629.5" stroke="#f07c7c" stroke-width="2.4"/>
<polygon points="399.5,629.5 406.5,624.5 406.8,633.5" fill="#f07c7c"/>
<path d="M407.5,635 L415,645 M414.5,635.5 L408,644.5" stroke="#f08a80" stroke-width="1" fill="none"/>
<line x1="381.6" y1="600.3" x2="381.6" y2="563" stroke="#0a62c8" stroke-width="2.6"/>
<polygon points="381.6,555.5 377.6,565 385.6,565" fill="#0a62c8"/>
<path d="M377.6,544.6 H385 L377.8,554.8 H385.4" stroke="#2080e0" stroke-width="1.1" fill="none"/>
<line x1="381.6" y1="600" x2="426" y2="586" stroke="#0c9a50" stroke-width="2.4"/>
<polygon points="434.8,583.4 423.4,582.4 425.8,590.4" fill="#0c9050"/>
<path d="M437.2,576 L441.2,581.2 L445.4,576 M441.2,581.2 V586" stroke="#28a858" stroke-width="1.1" fill="none"/>
<!-- small UCS top -->
<line x1="860" y1="188.6" x2="875" y2="184.6" stroke="#22b060" stroke-width="1.1"/>
<line x1="874.5" y1="184" x2="874.5" y2="199.5" stroke="#1a78e0" stroke-width="1"/>
<line x1="876" y1="185" x2="894.5" y2="209.2" stroke="#e87878" stroke-width="1"/>
<rect x="872" y="183.4" width="6" height="5" fill="#fff" stroke="#e0e0e0" stroke-width=".5"/>
<!-- nav wheel -->
<circle cx="1140" cy="232.6" r="38" fill="#e3e3e3" stroke="#bcbcbc" stroke-width="1.1"/>
<g fill="#969696">
<polygon points="1137,200 1143,200 1140,204.5"/>
<polygon points="1137,265.5 1143,265.5 1140,261"/>
<polygon points="1107,229.6 1107,235.6 1111.5,232.6"/>
<polygon points="1173,229.6 1173,235.6 1168.500,232.6"/>
<polygon points="1114.5,211.500 1119.500,207 1120,212.500"/>
<polygon points="1165.500,211.500 1160.500,207 1160,212.500"/>
<polygon points="1114.500,253.500 1119.500,258.500 1120,252.500"/>
<polygon points="1165.500,253.500 1160.500,258.500 1160,252.500"/>
</g>
</g>
</svg>
<div class="abs" id="cmd"></div>
<div class="abs" style="left:146px;top:783px;width:1.500px;height:14px;background:repeating-linear-gradient(to bottom,#ddd 0 1.500px,transparent 1.500px 3px)"></div>
<div class="t" style="left:153px;top:784.3px;font-family:'Liberation Mono',monospace;font-size:11.3px;line-height:12px;color:#f0f0f0">Command:</div>
<div class="t" style="left:217px;top:782.500px;font-size:14px;line-height:15px;color:#9a9a9a;font-style:italic">输入命令</div>
<div class="abs" style="left:1072px;top:786.500px;width:0;height:0;border-left:5.500px solid transparent;border-right:5.500px solid transparent;border-bottom:5px solid #f4f4f4"></div>
<div class="abs" id="layrow"></div>
<svg class="abs" style="left:44px;top:804px" width="90" height="18" viewBox="44 804 90 18">
<g fill="#000"><rect x="48" y="808.500" width="1.600" height="9"/><polygon points="57,808.500 57,817.500 50.500,813"/>
<polygon points="73.500,808.500 73.500,817.500 66.500,813"/>
<polygon points="83.500,808.500 83.500,817.500 90.500,813"/>
<polygon points="100,808.500 100,817.500 106.500,813"/><rect x="107.400" y="808.500" width="1.600" height="9"/></g>
<g stroke="#d0d0d0" stroke-width="1"><line x1="61.500" y1="806" x2="61.500" y2="821"/><line x1="78.500" y1="806" x2="78.500" y2="821"/><line x1="95.500" y1="806" x2="95.500" y2="821"/><line x1="112.500" y1="806" x2="112.500" y2="821"/></g>
<rect x="117.500" y="809.500" width="7" height="7" fill="none" stroke="#222" stroke-width="1"/><path d="M119.500,812 H122.500 M119.500,814 H122.500" stroke="#222" stroke-width="1"/>
</svg>
<div class="abs" style="left:129px;top:805px;width:33px;height:17px;background:#e4e4e4"></div>
<div class="lt" style="left:131.500px;top:807.5px;font-weight:bold;font-size:13.500px;color:#000">模型</div>
<div class="lt" style="left:167px"><span class="l">A4</span>横版</div>
<div class="abs" style="left:210.5px;top:806px;width:1px;height:15px;background:#e4e4e4"></div>
<div class="lt" style="left:216px"><span class="l">A4</span>竖版</div>
<div class="abs" style="left:259.5px;top:806px;width:1px;height:15px;background:#e4e4e4"></div>
<div class="lt" style="left:265px"><span class="l">A3</span>横版</div>
<div class="abs" style="left:308.5px;top:806px;width:1px;height:15px;background:#e4e4e4"></div>
<div class="lt" style="left:314px"><span class="l">A3</span>竖版</div>
<div class="abs" style="left:357.5px;top:806px;width:1px;height:15px;background:#e4e4e4"></div>
<div class="lt" style="left:363px"><span class="l">A2</span>横版</div>
<div class="abs" style="left:406.5px;top:806px;width:1px;height:15px;background:#e4e4e4"></div>
<div class="lt" style="left:412px"><span class="l">A2</span>竖版</div>
<div class="abs" style="left:455.5px;top:806px;width:1px;height:15px;background:#e4e4e4"></div>
<div class="lt" style="left:461px"><span class="l">A1</span>横版</div>
<div class="abs" style="left:504.5px;top:806px;width:1px;height:15px;background:#e4e4e4"></div>
<div class="lt" style="left:510px"><span class="l">A1</span>竖版</div>
<div class="abs" style="left:553.5px;top:806px;width:1px;height:15px;background:#e4e4e4"></div>
<div class="lt" style="left:559px"><span class="l">A0</span>横版</div>
<div class="abs" style="left:602.5px;top:806px;width:1px;height:15px;background:#e4e4e4"></div>
<div class="lt" style="left:608px"><span class="l">A0</span>竖版</div>
<div class="abs" style="left:651.5px;top:806px;width:1px;height:15px;background:#e4e4e4"></div>
<div class="lt" style="left:654.500px">+</div>
<div class="abs" id="status"></div><div class="abs" id="stline"></div>
<div class="st" style="left:2px;color:#333">就绪</div>
<div class="st n" style="left:194px">-181.72, 370.13, 0</div>
<div class="st e" style="left:308.3px;transform:scaleX(0.81)">PC_TEXTSTYLE</div>
<div class="st e" style="left:404px;transform:scaleX(0.811)">TH_GBDIM</div>
<div class="st " style="left:470px"><span style="font-size:13px;letter-spacing:-1.1px;line-height:10px">3D</span><span style="margin-left:.8px">机械</span></div>
<div class="st e g" style="left:521px;transform:scaleX(0.782)">SNAP</div>
<div class="st e g" style="left:563.4px;transform:scaleX(0.735)">GRID</div>
<div class="st g" style="left:598.5px">正交</div>
<div class="st g" style="left:629.5px">极坐标</div>
<div class="st on" style="left:673px">对象捕捉</div>
<div class="st on" style="left:729.3px">追踪</div>
<div class="st g" style="left:761.5px">线宽</div>
<div class="st e" style="left:795.6px;transform:scaleX(0.829)">TILE</div>
<div class="st e" style="left:827.6px;transform:scaleX(0.884)">1:1</div>
<div class="st e g" style="left:853.6px;transform:scaleX(0.75)">DUCS</div>
<div class="st e on" style="left:890.6px;transform:scaleX(0.829)">DYN</div>
<div class="st e on" style="left:922.7px;transform:scaleX(0.808)">QUAD</div>
<div class="st on" style="left:964px">候选物</div>
<div class="st e g" style="left:1008.2px;transform:scaleX(0.802)">HKA</div>
<div class="st e g" style="left:1039.2px;transform:scaleX(0.813)">LOCKUI</div>
<div class="st " style="left:1087.7px">无</div>
<div class="ssep" style="left:158px"></div>
<div class="ssep" style="left:304px"></div>
<div class="ssep" style="left:399.5px"></div>
<div class="ssep" style="left:465.5px"></div>
<div class="ssep" style="left:513.5px"></div>
<div class="ssep" style="left:555.5px"></div>
<div class="ssep" style="left:595.5px"></div>
<div class="ssep" style="left:625.5px"></div>
<div class="ssep" style="left:669.5px"></div>
<div class="ssep" style="left:726px"></div>
<div class="ssep" style="left:757.7px"></div>
<div class="ssep" style="left:790.5px"></div>
<div class="ssep" style="left:823.3px"></div>
<div class="ssep" style="left:849px"></div>
<div class="ssep" style="left:887px"></div>
<div class="ssep" style="left:919px"></div>
<div class="ssep" style="left:960px"></div>
<div class="ssep" style="left:1004.3px"></div>
<div class="ssep" style="left:1035.3px"></div>
<div class="ssep" style="left:1084.7px"></div>
<div class="ssep" style="left:1103.7px"></div>
<div class="abs" style="left:1135px;top:832px;width:0;height:0;border-left:3.5px solid transparent;border-right:3.5px solid transparent;border-top:4px solid #000"></div>
<svg class="abs" style="left:1105px;top:823px" width="20" height="17" viewBox="1105 823 20 17">
<ellipse cx="1113.300" cy="830" rx="6.400" ry="4.700" fill="#fff" stroke="#000" stroke-width="1.500"/>
<line x1="1106.300" y1="828.800" x2="1113.500" y2="828.800" stroke="#0000ff" stroke-width="1.700"/>
<line x1="1113" y1="827.600" x2="1113" y2="838.200" stroke="#0000ff" stroke-width="1.800"/>
<circle cx="1117.400" cy="831.500" r="1.500" fill="#ff2000"/><circle cx="1117.500" cy="831.500" r=".6" fill="#ffe000"/>
<line x1="1113.900" y1="837" x2="1116.500" y2="837" stroke="#000" stroke-width="1.800"/>
<line x1="1116.500" y1="837" x2="1122" y2="837" stroke="#ff0000" stroke-width="1.800" stroke-dasharray="2.2,.8"/>
</svg>
<svg class="abs" style="left:1180px;top:830px" width="9" height="9" viewBox="0 0 9 9"><g fill="#b8b8b8"><rect x="6" y="0" width="2" height="2"/><rect x="3" y="3" width="2" height="2"/><rect x="6" y="3" width="2" height="2"/><rect x="0" y="6" width="2" height="2"/><rect x="3" y="6" width="2" height="2"/><rect x="6" y="6" width="2" height="2"/></g></svg>
</body>
</html>
